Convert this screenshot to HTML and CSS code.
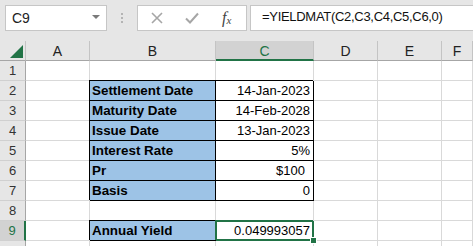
FILE: index.html
```html
<!DOCTYPE html>
<html lang="en">
<head>
  <meta charset="UTF-8">
  <title>YIELDMAT</title>
  <link rel="stylesheet" href="styles.css">
</head>
<body>
  <div class="toolbar">
    <div class="namebox">
      <span>C9</span>
      <span class="caret"></span>
    </div>
    <div class="grip"><i></i><i></i><i></i></div>
    <div class="fxbox">
      <svg width="12" height="12" viewBox="0 0 12 12"><path d="M1 1L11 11M11 1L1 11" stroke="#a6a6a6" stroke-width="1.6" fill="none"/></svg>
      <svg width="14" height="12" viewBox="0 0 14 12"><path d="M1 6.5L5 10.5L13 1.5" stroke="#a6a6a6" stroke-width="2" fill="none"/></svg>
      <span class="fx">f<sub>x</sub></span>
    </div>
    <div class="formula">=YIELDMAT(C2,C3,C4,C5,C6,0)</div>
  </div>

  <div class="sheet">
    <div class="hd corner"><span class="tri"></span></div>
    <div class="hd">A</div>
    <div class="hd">B</div>
    <div class="hd sel">C</div>
    <div class="hd">D</div>
    <div class="hd">E</div>
    <div class="hd">F</div>

    <div class="rh">1</div><div></div><div></div><div></div><div></div><div></div><div></div>

    <div class="rh">2</div><div></div>
    <div class="box lbl">Settlement Date</div><div class="box num">14-Jan-2023</div>
    <div></div><div></div><div></div>

    <div class="rh">3</div><div></div>
    <div class="box lbl">Maturity Date</div><div class="box num">14-Feb-2028</div>
    <div></div><div></div><div></div>

    <div class="rh">4</div><div></div>
    <div class="box lbl">Issue Date</div><div class="box num">13-Jan-2023</div>
    <div></div><div></div><div></div>

    <div class="rh">5</div><div></div>
    <div class="box lbl">Interest Rate</div><div class="box num">5%</div>
    <div></div><div></div><div></div>

    <div class="rh">6</div><div></div>
    <div class="box lbl">Pr</div><div class="box num money">$100</div>
    <div></div><div></div><div></div>

    <div class="rh">7</div><div></div>
    <div class="box lbl">Basis</div><div class="box num">0</div>
    <div></div><div></div><div></div>

    <div class="rh">8</div><div></div><div></div><div></div><div></div><div></div><div></div>

    <div class="rh sel">9</div><div></div>
    <div class="box lbl">Annual Yield</div><div class="num active">0.049993057</div>
    <div></div><div></div><div></div>

    <div class="rh"></div><div></div><div></div><div></div><div></div><div></div><div></div>
  </div>
</body>
</html>
```

FILE: styles.css
```css
body {
  margin: 0;
  background-color: #ffffff;
  font-family: "Liberation Sans", Arial, sans-serif;
  color: #000;
}

.toolbar {
  display: flex;
  align-items: flex-start;
  height: 41px;
  padding: 5px 0 0 5px;
  box-sizing: border-box;
  background-color: #e6e6e6;
}

.namebox,
.fxbox,
.formula {
  height: 26px;
  box-sizing: border-box;
  background-color: #fff;
  border: 1px solid #c6c6c6;
}

.namebox {
  width: 102px;
  display: flex;
  align-items: center;
  justify-content: space-between;
  padding: 0 6px 0 6px;
  font-size: 14px;
  color: #222;
}

.caret {
  width: 0;
  height: 0;
  border-left: 4px solid transparent;
  border-right: 4px solid transparent;
  border-top: 4px solid #7a7a7a;
  margin-bottom: 2px;
}

.grip {
  width: 30px;
  height: 26px;
  display: flex;
  flex-direction: column;
  align-items: center;
  justify-content: center;
  gap: 2px;
}

.grip i {
  width: 2px;
  height: 2px;
  background-color: #b4b4b4;
}

.fxbox {
  width: 110px;
  display: flex;
  align-items: center;
  padding-left: 13px;
  gap: 22px;
}

.fx {
  font-family: "Liberation Serif", serif;
  font-style: italic;
  font-size: 16px;
  color: #444;
  margin-left: 1px;
}

.fx sub {
  font-size: 11px;
  vertical-align: -1px;
}

.formula {
  flex: 1;
  margin-left: 3px;
  border-right: none;
  padding: 3px 0 0 11px;
  font-size: 13px;
  letter-spacing: -0.3px;
  color: #111;
}

.sheet {
  display: grid;
  grid-template-columns: 26px 64px 126px 98px 64px 64px 1fr;
  grid-auto-rows: 20px;
  font-size: 13px;
}

.sheet > div {
  box-sizing: border-box;
  border-right: 1px solid #d9d9d9;
  border-bottom: 1px solid #d9d9d9;
  line-height: 20px;
  white-space: nowrap;
}

.sheet > .hd {
  background-color: #e6e6e6;
  border-right-color: #c4c4c4;
  border-bottom-color: #a6a6a6;
  text-align: center;
  font-size: 14px;
  color: #222;
}

.sheet > .hd.sel {
  background-color: #d2d2d2;
  border-bottom: 2px solid #217346;
  color: #217346;
}

.corner {
  position: relative;
}

.tri {
  position: absolute;
  right: 2px;
  bottom: 2px;
  width: 0;
  height: 0;
  border-left: 13px solid transparent;
  border-bottom: 13px solid #217346;
}

.sheet > .rh {
  background-color: #e6e6e6;
  border-right-color: #a6a6a6;
  border-bottom-color: #d0d0d0;
  text-align: center;
  color: #333;
}

.sheet > .rh.sel {
  background-color: #d2d2d2;
  border-right: 2px solid #217346;
  color: #217346;
}

.sheet > .box {
  border-right-color: #000;
  border-bottom-color: #000;
  box-shadow: -1px -1px 0 #000;
}

.lbl {
  background-color: #9dc3e6;
  font-weight: bold;
  font-size: 13.4px;
  padding-left: 2px;
}

.num {
  text-align: right;
  padding-right: 3px;
}

.money {
  padding-right: 8px;
}

.sheet > .active {
  position: relative;
  z-index: 2;
  border-right-color: #217346;
  border-bottom-color: #217346;
  box-shadow: -1px -1px 0 #217346, inset 1px 1px 0 #217346, inset -1px -1px 0 #217346;
}

.active::after {
  content: "";
  position: absolute;
  right: -4px;
  bottom: -4px;
  width: 5px;
  height: 5px;
  background-color: #217346;
  border: 1px solid #fff;
}
```
